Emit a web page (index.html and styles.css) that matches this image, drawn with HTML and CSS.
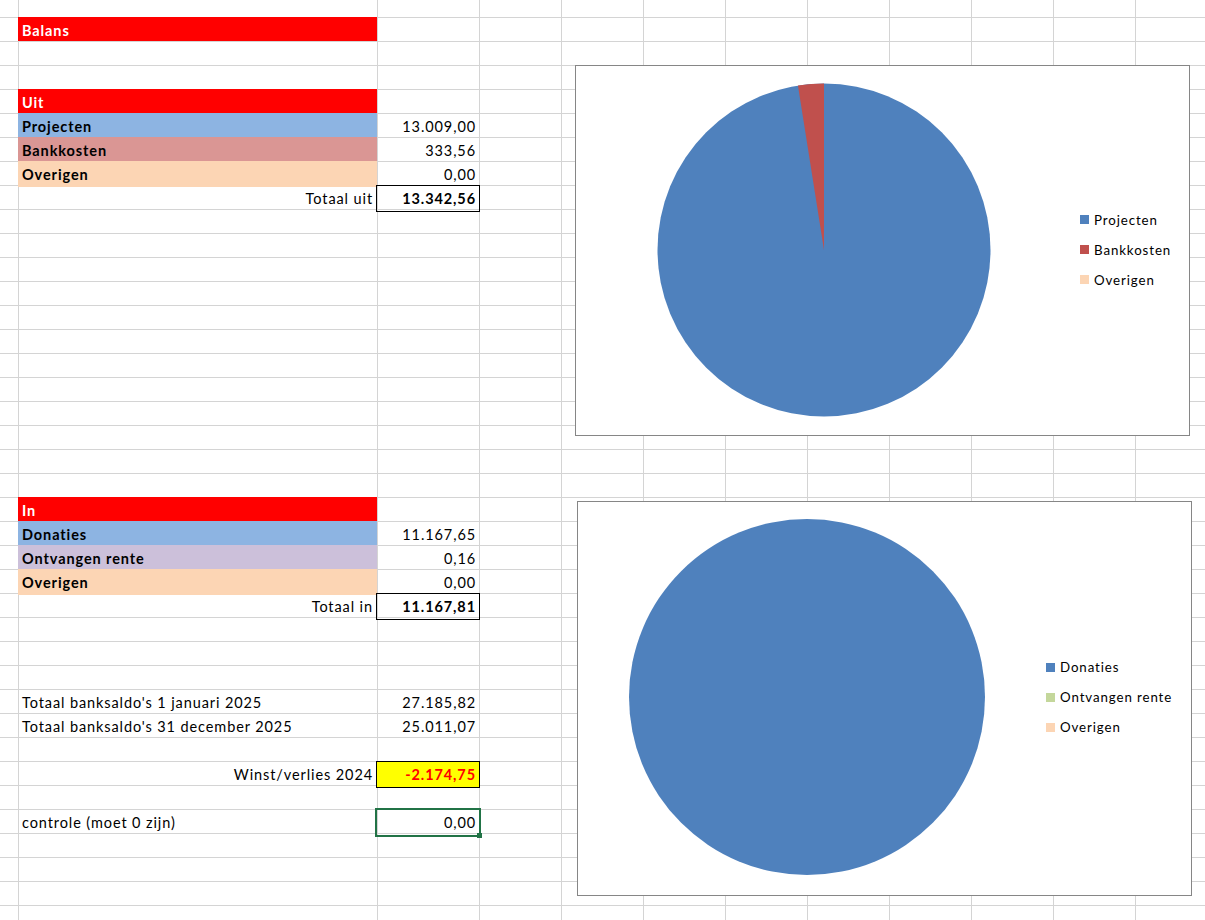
FILE: index.html
```html
<!DOCTYPE html>
<html lang="nl">
<head>
<meta charset="utf-8">
<title>Balans</title>
<link rel="stylesheet" href="styles.css">
</head>
<body>
<div class="sheet">
  <div class="left">
    <div class="row first"></div>
    <div class="row"><span class="a"></span><span class="b head">Balans</span><span class="c"></span></div>
    <div class="row"></div>
    <div class="row"></div>
    <div class="row"><span class="a"></span><span class="b head">Uit</span><span class="c"></span></div>
    <div class="row"><span class="a"></span><span class="b fill-blue">Projecten</span><span class="c">13.009,00</span></div>
    <div class="row"><span class="a"></span><span class="b fill-red">Bankkosten</span><span class="c">333,56</span></div>
    <div class="row"><span class="a"></span><span class="b fill-peach">Overigen</span><span class="c">0,00</span></div>
    <div class="row"><span class="a"></span><span class="b to-right">Totaal uit</span><span class="c total">13.342,56</span></div>
    <div class="row"></div>
    <div class="row"></div>
    <div class="row"></div>
    <div class="row"></div>
    <div class="row"></div>
    <div class="row"></div>
    <div class="row"></div>
    <div class="row"></div>
    <div class="row"></div>
    <div class="row"></div>
    <div class="row"></div>
    <div class="row"></div>
    <div class="row"><span class="a"></span><span class="b head">In</span><span class="c"></span></div>
    <div class="row"><span class="a"></span><span class="b fill-blue">Donaties</span><span class="c">11.167,65</span></div>
    <div class="row"><span class="a"></span><span class="b fill-lilac">Ontvangen rente</span><span class="c">0,16</span></div>
    <div class="row"><span class="a"></span><span class="b fill-peach">Overigen</span><span class="c">0,00</span></div>
    <div class="row"><span class="a"></span><span class="b to-right">Totaal in</span><span class="c total">11.167,81</span></div>
    <div class="row"></div>
    <div class="row"></div>
    <div class="row"></div>
    <div class="row"><span class="a"></span><span class="b">Totaal banksaldo's 1 januari 2025</span><span class="c">27.185,82</span></div>
    <div class="row"><span class="a"></span><span class="b">Totaal banksaldo's 31 december 2025</span><span class="c">25.011,07</span></div>
    <div class="row"></div>
    <div class="row"><span class="a"></span><span class="b to-right">Winst/verlies 2024</span><span class="c total result">-2.174,75</span></div>
    <div class="row"></div>
    <div class="row"><span class="a"></span><span class="b">controle (moet 0 zijn)</span><span class="c selected">0,00</span></div>
    <div class="row"></div>
    <div class="row"></div>
    <div class="row"></div>
    <div class="row"></div>
  </div>
  <div class="right"></div>

  <div class="chart chart-uit">
    <svg class="pie pie-uit" viewBox="0 0 334 334" width="334" height="334">
      <circle cx="167" cy="167" r="166.5" fill="#4f81bd"/>
      <path d="M167 167 L167 0.5 A166.5 166.5 0 0 0 140.95 2.55 Z" fill="#c0504d"/>
    </svg>
    <div class="legend legend-uit">
      <div class="legend-item"><span class="swatch sw-blue"></span>Projecten</div>
      <div class="legend-item"><span class="swatch sw-red"></span>Bankkosten</div>
      <div class="legend-item"><span class="swatch sw-peach"></span>Overigen</div>
    </div>
  </div>

  <div class="chart chart-in">
    <svg class="pie pie-in" viewBox="0 0 356 356" width="356" height="356">
      <circle cx="178" cy="178" r="178" fill="#4f81bd"/>
    </svg>
    <div class="legend legend-in">
      <div class="legend-item"><span class="swatch sw-blue"></span>Donaties</div>
      <div class="legend-item"><span class="swatch sw-green"></span>Ontvangen rente</div>
      <div class="legend-item"><span class="swatch sw-peach"></span>Overigen</div>
    </div>
  </div>
</div>
</body>
</html>
```

FILE: styles.css
```css
html, body {
  margin: 0;
  padding: 0;
  background: #fff;
}

.sheet {
  position: relative;
  width: 1205px;
  height: 920px;
  overflow: hidden;
  display: flex;
  font-family: Lato, "Liberation Sans", sans-serif;
  font-size: 14.5px;
  letter-spacing: 0.9px;
  color: #000;
}

.left {
  width: 479px;
  flex: none;
  background:
    linear-gradient(#d4d4d4, #d4d4d4) 18px 0 / 1px 100% no-repeat,
    linear-gradient(#d4d4d4, #d4d4d4) 377px 0 / 1px 100% no-repeat,
    linear-gradient(#d4d4d4 1px, transparent 1px) 0 17px / 100% 24px;
}

.right {
  flex: 1;
  background:
    linear-gradient(to right, #d4d4d4 1px, transparent 1px) 0 0 / 82px 100%,
    linear-gradient(#d4d4d4 1px, transparent 1px) 0 17px / 100% 24px;
}

.row {
  display: grid;
  grid-template-columns: 18px 359px 102px;
  height: 24px;
  line-height: 24px;
}

.row.first {
  height: 17px;
}

.b,
.c {
  padding-top: 2px;
  white-space: nowrap;
}

.b {
  padding-left: 4px;
  overflow: hidden;
}

.b.to-right {
  text-align: right;
  padding-right: 4px;
}

.c {
  position: relative;
  text-align: right;
  padding-right: 3px;
}

.head {
  background: #ff0000;
  color: #fff;
  font-weight: bold;
}

.fill-blue {
  background: #8db4e2;
  font-weight: bold;
}

.fill-red {
  background: #da9694;
  font-weight: bold;
}

.fill-peach {
  background: #fcd5b4;
  font-weight: bold;
}

.fill-lilac {
  background: #ccc0da;
  font-weight: bold;
}

.total {
  font-weight: bold;
}

.total::after {
  content: "";
  position: absolute;
  left: -1px;
  right: -1px;
  top: 0;
  bottom: -1px;
  border: 1px solid #000;
}

.result {
  background: #ffff00;
  color: #ff0000;
}

.selected::after {
  content: "";
  position: absolute;
  left: -2px;
  right: -2px;
  top: -1px;
  bottom: -2px;
  border: 2px solid #217346;
}

.selected::before {
  content: "";
  position: absolute;
  right: -3px;
  bottom: -3px;
  width: 5px;
  height: 5px;
  background: #217346;
  z-index: 2;
}

.chart {
  position: absolute;
  box-sizing: border-box;
  background: #fff;
  border: 1px solid #868686;
  display: flex;
  align-items: center;
}

.chart-uit {
  left: 575px;
  top: 65px;
  width: 615px;
  height: 371px;
  padding-bottom: 2px;
}

.chart-in {
  left: 577px;
  top: 501px;
  width: 615px;
  height: 395px;
  padding-bottom: 3px;
}

.pie {
  display: block;
  flex: none;
}

.pie-uit {
  margin-left: 81px;
}

.pie-in {
  margin-left: 51px;
}

.legend {
  display: flex;
  flex-direction: column;
  font-size: 13.3px;
  letter-spacing: 0.9px;
  color: #000;
}

.legend-uit {
  margin-left: 89px;
}

.legend-in {
  margin-left: 61px;
}

.legend-item {
  display: flex;
  align-items: center;
  gap: 5px;
  height: 30px;
  white-space: nowrap;
}

.swatch {
  width: 9px;
  height: 9px;
  flex: none;
}

.sw-blue { background: #4f81bd; }
.sw-red { background: #c0504d; }
.sw-peach { background: #fcd5b4; }
.sw-green { background: #c4d79b; }
```
